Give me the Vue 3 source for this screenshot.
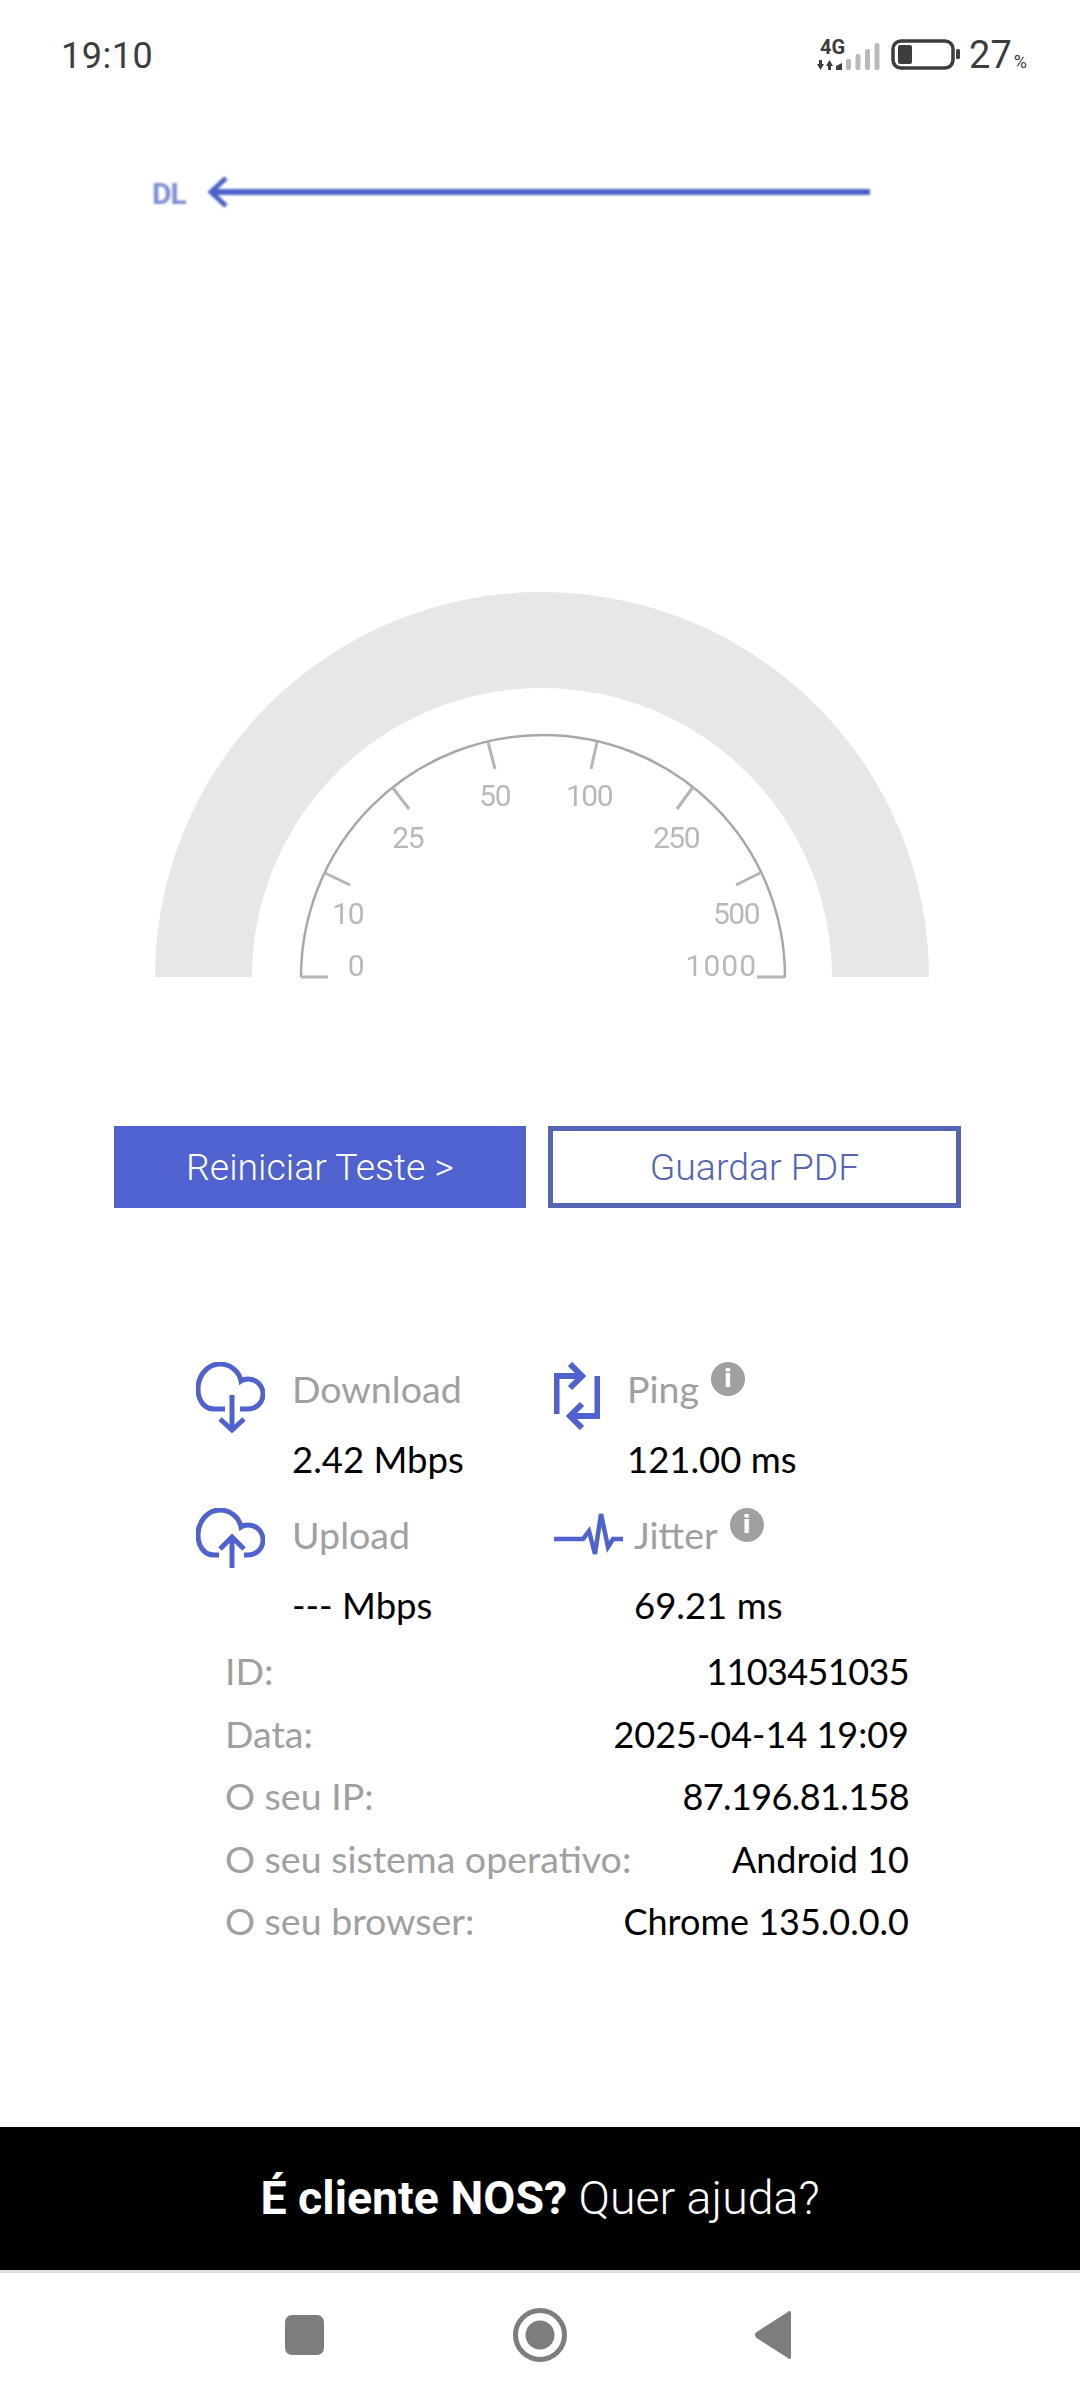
<script setup>
const ticks = [
  [325, 873, 350, 885], [393, 788, 409, 809], [488, 742, 495, 769],
  [597, 742, 591, 769], [693, 787, 677, 809], [760, 873, 736, 885],
  [301, 977, 328, 977], [785, 977, 757, 977],
]
const dialLabels = [
  { t: '0', x: 363, y: 976 },
  { t: '10', x: 363, y: 924 },
  { t: '25', x: 423, y: 848 },
  { t: '50', x: 510, y: 806 },
  { t: '100', x: 612, y: 806 },
  { t: '250', x: 699, y: 848 },
  { t: '500', x: 759, y: 924 },
  { t: '1000', x: 757, y: 976 },
]
const bars = [
  { x: 847, y: 57 }, { x: 856.5, y: 52 }, { x: 866, y: 47 }, { x: 875.5, y: 41 },
]
const infoRows = [
  { key: 'ID:', val: '1103451035', num: true },
  { key: 'Data:', val: '2025-04-14 19:09' },
  { key: 'O seu IP:', val: '87.196.81.158', num: true },
  { key: 'O seu sistema operativo:', val: 'Android 10' },
  { key: 'O seu browser:', val: 'Chrome 135.0.0.0' },
]
</script>

<template>
  <div class="screen">
    <header class="status">
      <span class="time">19:10</span>
      <div class="status-right">
        <svg class="signal" viewBox="814 34 68 38" width="68" height="38">
          <text x="821" y="52" class="net">4G</text>
          <path d="M818 62h2v-4h3v4h2l-3.500 6z" fill="#3d3d3d" />
          <path d="M827 64h2v4h3v-4h2l-3.500-6z" fill="#3d3d3d" />
          <path d="M837 68v-4l6-3v7z" fill="#3d3d3d" />
          <rect v-for="b in bars" :key="b.x" :x="b.x" :y="b.y" width="5" :height="68 - b.y" rx="2" fill="#b9b9b9" />
        </svg>
        <svg class="battery" viewBox="0 0 70 32" width="70" height="32">
          <rect x="2" y="2" width="60" height="27" rx="8" fill="none" stroke="#3d3d3d" stroke-width="3.500" />
          <rect x="7" y="6" width="14" height="19" rx="2" fill="#3d3d3d" />
          <rect x="65" y="10" width="4" height="10" rx="1.500" fill="#3d3d3d" />
        </svg>
        <span class="batt-num">27</span><span class="batt-pct">%</span>
      </div>
    </header>

    <svg class="dl-arrow" viewBox="0 0 1080 48" width="1080" height="48">
      <text x="152" y="36" class="dl-text">DL</text>
      <path d="M870 24H212" stroke="#4d63c9" stroke-width="6" fill="none" />
      <path d="M226 10L211 24L226 38" stroke="#4d63c9" stroke-width="5" fill="none" />
    </svg>

    <svg class="gauge" viewBox="0 585 1080 400" width="1080" height="400">
      <path d="M155 977A387 385 0 0 1 929 977H832A290 289 0 0 0 252 977Z" fill="#e7e6e8" />
      <g class="dial">
        <path d="M301 977A242 242 0 0 1 785 977" fill="none" stroke="#a8a8a8" stroke-width="2.500" />
        <path v-for="(k, i) in ticks" :key="i" :d="`M${k[0]} ${k[1]}L${k[2]} ${k[3]}`" stroke="#b5b5b5" stroke-width="3" />
        <text v-for="l in dialLabels" :key="l.t" :x="l.x" :y="l.y" class="dial-label" :class="{ 'dial-wide': l.t === '1000' }">{{ l.t }}</text>
      </g>
    </svg>

    <div class="actions">
      <button class="btn btn-primary">Reiniciar Teste &gt;</button>
      <button class="btn btn-outline">Guardar PDF</button>
    </div>

    <section class="stats">
      <div class="stat">
        <svg class="ic ic-cloud" viewBox="0 0 69 71" width="69" height="71" fill="none">
          <path d="M29 47H18C8 47 2 38 2 27C2 13 12 2 24 2C34 2 43 9 45 19C48 17 50 17 52 17C61 17 67 24 67 32C67 41 60 47 52 47H44" />
          <path d="M36 33V67M24 57L36 68L48 57" />
        </svg>
        <div class="stat-text">
          <div class="stat-label">Download</div>
          <div class="stat-value">2.42 Mbps</div>
        </div>
      </div>
      <div class="stat">
        <svg class="ic ic-ping" viewBox="0 0 46 68" width="46" height="68" fill="none">
          <path d="M2.500 52V14H28M16 2L28 14L16 26" />
          <path d="M43.500 14V54H16M28 42L16 54L28 66" />
        </svg>
        <div class="stat-text">
          <div class="stat-label">Ping<span class="info">i</span></div>
          <div class="stat-value">121.00 ms</div>
        </div>
      </div>
      <div class="stat">
        <svg class="ic ic-cloud" viewBox="0 0 69 71" width="69" height="71" fill="none">
          <path d="M23 47H18C8 47 2 38 2 27C2 13 12 2 24 2C34 2 43 9 45 19C48 17 50 17 52 17C61 17 67 24 67 32C67 41 60 47 52 47H48" />
          <path d="M36 30V60M24 41L36 29L48 41" />
        </svg>
        <div class="stat-text">
          <div class="stat-label">Upload</div>
          <div class="stat-value">--- Mbps</div>
        </div>
      </div>
      <div class="stat">
        <svg class="ic ic-jitter" viewBox="0 0 69 44" width="69" height="44" fill="none">
          <path d="M0 27H29L35 19L41 42L47 2L54 35L59 27H69" />
        </svg>
        <div class="stat-text">
          <div class="stat-label">Jitter<span class="info">i</span></div>
          <div class="stat-value">69.21 ms</div>
        </div>
      </div>
    </section>

    <section class="info-list">
      <div v-for="row in infoRows" :key="row.key" class="info-row">
        <span class="info-key">{{ row.key }}</span>
        <span class="info-val" :class="{ 'info-num': row.num }">{{ row.val }}</span>
      </div>
    </section>

    <footer class="help"><b>É cliente NOS?</b> Quer ajuda?</footer>

    <nav class="navbar">
      <svg viewBox="0 0 1080 127" width="1080" height="127">
        <rect x="285" y="42" width="39" height="40" rx="7" fill="#7d7d7d" />
        <circle cx="540" cy="62" r="24.500" fill="none" stroke="#7d7d7d" stroke-width="5" />
        <circle cx="540" cy="62" r="14.500" fill="#7d7d7d" />
        <path d="M790 40V84Q790 86 788 84L757 64Q755 62 757 60L788 40Q790 38 790 40Z" fill="#7d7d7d" stroke="#7d7d7d" stroke-width="2" />
      </svg>
    </nav>
  </div>
</template>

<style scoped>
.screen {
  width: 1080px;
  height: 2400px;
  display: flex;
  flex-direction: column;
  background: #fff;
  overflow: hidden;
  font-family: Lato, "Open Sans", sans-serif;
}

.status {
  height: 108px;
  flex: none;
  display: flex;
  justify-content: space-between;
  align-items: center;
  padding: 0 53px 0 61px;
  box-sizing: border-box;
  color: #3d3d3d;
  font-family: Roboto, sans-serif;
}

.time {
  font-size: 36px;
  letter-spacing: 0.5px;
  margin-top: 3px;
}

.status-right {
  display: flex;
  align-items: center;
}

.signal {
  display: block;
  margin-right: 10px;
  margin-top: 2px;
}

.battery {
  display: block;
  margin-right: 8px;
  margin-top: 1px;
}

.net {
  font-family: Roboto, sans-serif;
  font-size: 20px;
  font-weight: 700;
  fill: #3d3d3d;
}

.batt-num {
  font-size: 38px;
  margin-top: 2px;
}

.batt-pct {
  font-size: 18px;
  margin-top: 14px;
  margin-left: 2px;
}

.dl-arrow {
  display: block;
  flex: none;
  margin-top: 60px;
  filter: blur(0.9px);
}

.dl-text {
  font-family: Roboto, sans-serif;
  font-size: 30px;
  font-weight: 700;
  letter-spacing: -1px;
  fill: #7c8dd6;
}

.gauge {
  display: block;
  flex: none;
  margin-top: 369px;
}

.dial {
  filter: blur(0.5px);
}

.dial-label {
  font-family: Roboto, sans-serif;
  font-size: 30px;
  fill: #b9b9b9;
  text-anchor: end;
  letter-spacing: -1.500px;
}

.dial-wide {
  letter-spacing: 1px;
}

.actions {
  flex: none;
  display: flex;
  gap: 22px;
  margin-top: 141px;
  padding-left: 114px;
}

.btn {
  width: 412px;
  height: 82px;
  box-sizing: border-box;
  font-family: Roboto, sans-serif;
  font-size: 37.400px;
  font-weight: 300;
  border-radius: 0;
  padding: 0;
}

.btn-primary {
  background: #4f62cf;
  border: none;
  color: #fff;
}

.btn-outline {
  width: 413px;
  background: #fff;
  border: 5px solid #5565b5;
  color: #5565b5;
}

.stats {
  flex: none;
  display: grid;
  grid-template-columns: 358px 1fr;
  grid-template-rows: 146px 132px;
  margin-top: 154px;
  padding-left: 196px;
}

.stat {
  display: flex;
  align-items: flex-start;
}

.ic {
  flex: none;
  display: block;
  stroke: #4f62cf;
  stroke-width: 5;
}

.ic-cloud {
  margin-right: 27px;
}

.ic-ping {
  margin-right: 29px;
  stroke-width: 6;
}

.ic-jitter {
  margin-top: 4px;
  margin-right: 11px;
  stroke-width: 4.500;
}

.stat-text {
  flex: none;
  margin-top: -9px;
}

.ic-ping + .stat-text {
  margin-left: -2px;
}

.stat-label {
  height: 71px;
  line-height: 71px;
  font-size: 37.600px;
  color: #a0a0a0;
  display: flex;
  align-items: flex-start;
}

.stat-value {
  line-height: 71px;
  font-size: 36.500px;
  color: #000;
}

.info {
  width: 34px;
  height: 34px;
  margin-top: 9px;
  margin-left: 12px;
  border-radius: 50%;
  background: #a0a0a0;
  color: #fff;
  font-family: "DejaVu Sans", sans-serif;
  font-size: 24px;
  font-weight: 700;
  line-height: 34px;
  text-align: center;
}

.info-list {
  flex: none;
  padding: 0 171px 0 225px;
}

.info-row {
  display: flex;
  justify-content: space-between;
  height: 62.600px;
  line-height: 62.600px;
}

.info-key {
  font-size: 37.500px;
  color: #a0a0a0;
}

.info-val {
  font-size: 36px;
  color: #000;
}

.info-num {
  letter-spacing: -0.600px;
}

.help {
  flex: none;
  margin-top: auto;
  height: 143px;
  line-height: 143px;
  background: #000;
  color: #fff;
  text-align: center;
  font-family: Roboto, sans-serif;
  font-size: 46.500px;
  font-weight: 300;
}

.help b {
  font-weight: 700;
}

.navbar {
  flex: none;
  height: 127px;
  border-top: 3px solid #dedede;
}

.navbar svg {
  display: block;
}
</style>

<style>
body {
  margin: 0;
  background: #fff;
}
</style>
